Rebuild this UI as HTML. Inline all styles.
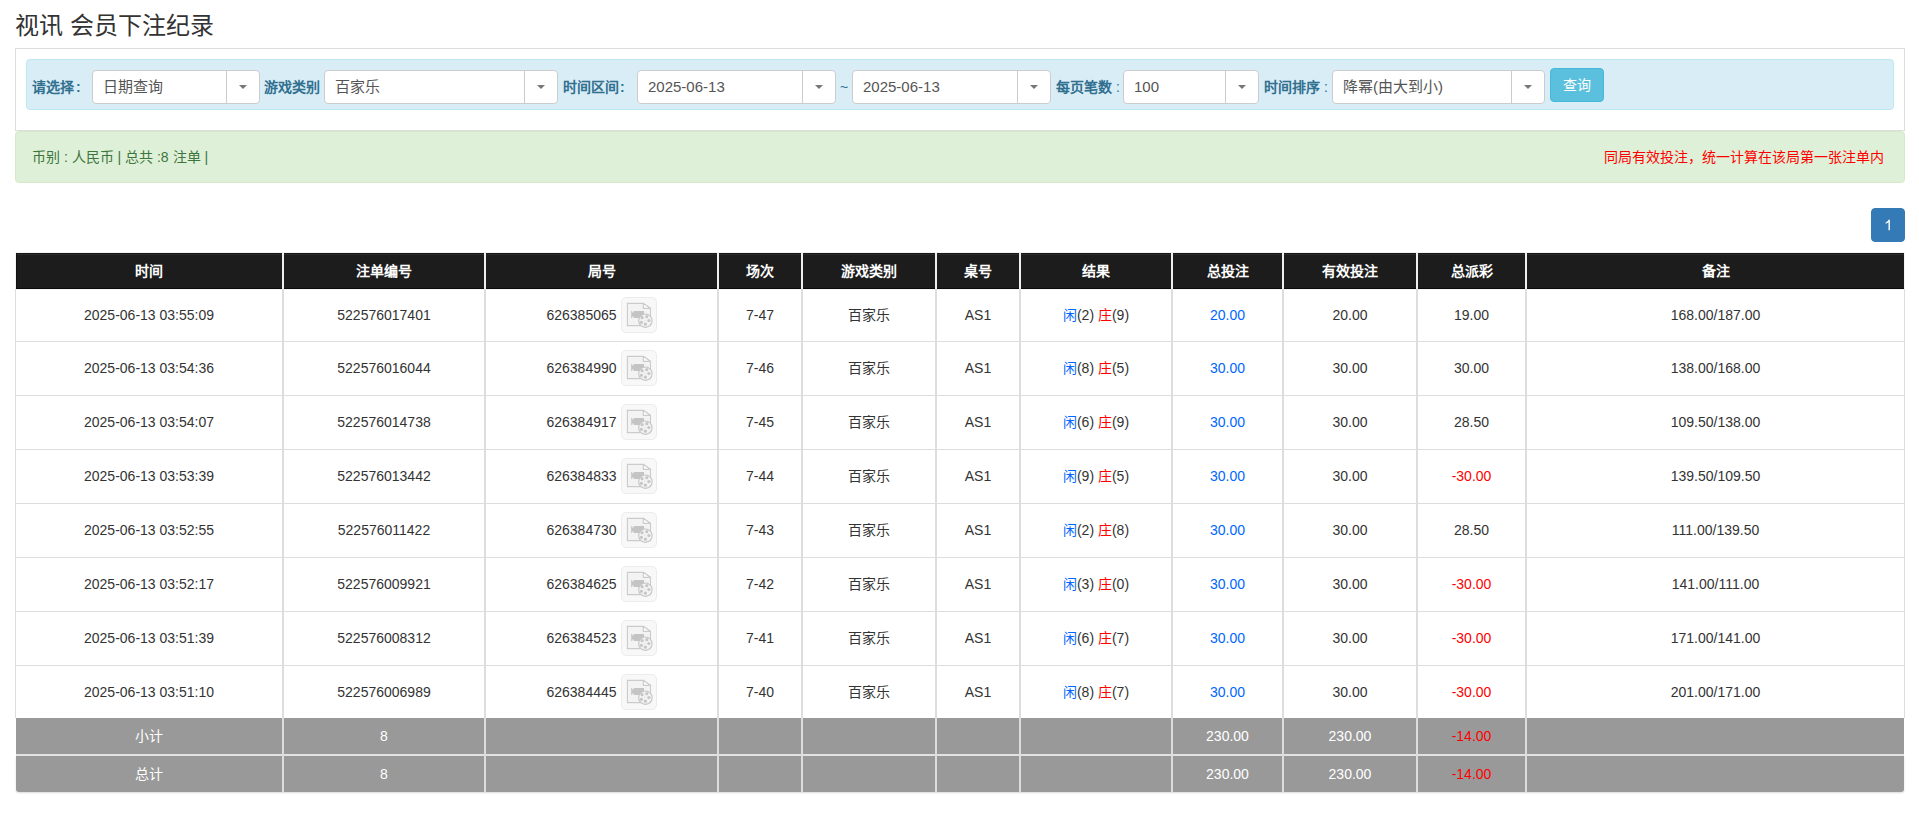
<!DOCTYPE html><html lang="zh-CN"><head><meta charset="utf-8"><style>
*{box-sizing:border-box;margin:0;padding:0}
html,body{width:1919px;height:815px;overflow:hidden;background:#fff}
body{font-family:"Liberation Sans",sans-serif;color:#333;font-size:14px;position:relative}
.a{position:absolute}
.title{left:15px;top:11px;font-size:24px;line-height:30px;color:#333;white-space:nowrap}
.well{left:15px;top:48px;width:1890px;height:83px;border:1px solid #ddd;}
.info{left:26px;top:59px;width:1868px;height:51px;background:#d9edf7;border:1px solid #bce8f1;border-radius:4px}
.lbl{font-weight:bold;color:#31708f;font-size:14px;line-height:16px;top:79px;white-space:nowrap}
.sel{top:70px;height:34px;background:#fff;border:1px solid #ccc;border-radius:4px}
.sel .t{position:absolute;left:10px;top:0;line-height:32px;font-size:15px;color:#555;white-space:nowrap}
.sel .dv{position:absolute;top:0;bottom:0;width:1px;background:#ccc}
.sel .ar{position:absolute;top:14px;width:0;height:0;border-left:4px solid transparent;border-right:4px solid transparent;border-top:4px solid #777}
.btn{left:1550px;top:68px;width:54px;height:34px;background:#5bc0de;border:1px solid #46b8da;border-radius:4px;color:#fff;font-size:14px;line-height:32px;text-align:center}
.succ{left:15px;top:131px;width:1890px;height:52px;background:#dff0d8;border:1px solid #d6e9c6;border-radius:4px}
.succ .l{position:absolute;left:16px;top:0;line-height:50px;font-size:14px;color:#3c763d;white-space:nowrap}
.succ .r{position:absolute;right:20px;top:0;line-height:50px;font-size:14px;color:#ff0000;white-space:nowrap}
.pg{position:absolute;left:1871px;top:208px;width:34px;height:34px;background:#337ab7;border:1px solid #337ab7;border-radius:4px;color:#fff;font-size:13px;font-weight:bold;line-height:32px;text-align:center}
.c{position:absolute;text-align:center;white-space:nowrap}
.hd{top:253px;height:36px;background:#1c1c1c;border-top:1px solid #161616;border-bottom:1px solid #0a0a0a;border-left:1px solid #111;box-shadow:inset 0 1px 0 #2a2a2a,0 0 1px rgba(0,0,0,.25)}
.ht{color:#fff;font-weight:bold;font-size:14px;line-height:36px;top:253px}
.vs{position:absolute;width:2px}
.hl{position:absolute;height:1px;background:#ddd}
.bd{color:#333;font-size:14px}
.blue{color:#0066ff}.red{color:#ff0000}
.ib{display:inline-block;width:36px;height:36px;vertical-align:middle;margin-left:4px;border:1px solid #ececec;border-radius:5px;background:#f8f8f8;position:relative;top:-1px}
.ib svg{position:absolute;left:-1px;top:-1px}
.gr{background:#999}
.gt{color:#fff;font-size:14px}
</style></head><body>

<div class="a title">视讯 会员下注纪录</div>
<div class="a well"></div>
<div class="a info"></div>
<div class="a lbl" style="left:32px">请选择<span style="margin-left:2px">:</span></div>
<div class="a lbl" style="left:264px">游戏类别</div>
<div class="a lbl" style="left:563px">时间区间<span style="margin-left:1px">:</span></div>
<div class="a lbl" style="left:840px;font-weight:normal">~</div>
<div class="a lbl" style="left:1056px">每页笔数 <span style="font-weight:normal">:</span></div>
<div class="a lbl" style="left:1264px">时间排序 <span style="font-weight:normal">:</span></div>
<div class="a sel" style="left:92px;width:168px"><span class="t">日期查询</span><span class="dv" style="left:133px"></span><span class="ar" style="left:146px"></span></div>
<div class="a sel" style="left:324px;width:234px"><span class="t">百家乐</span><span class="dv" style="left:199px"></span><span class="ar" style="left:212px"></span></div>
<div class="a sel" style="left:637px;width:199px"><span class="t">2025-06-13</span><span class="dv" style="left:164px"></span><span class="ar" style="left:177px"></span></div>
<div class="a sel" style="left:852px;width:199px"><span class="t">2025-06-13</span><span class="dv" style="left:164px"></span><span class="ar" style="left:177px"></span></div>
<div class="a sel" style="left:1123px;width:136px"><span class="t">100</span><span class="dv" style="left:101px"></span><span class="ar" style="left:114px"></span></div>
<div class="a sel" style="left:1332px;width:213px"><span class="t">降幂(由大到小)</span><span class="dv" style="left:178px"></span><span class="ar" style="left:191px"></span></div>
<div class="a btn">查询</div>
<div class="a succ"><span class="l">币别 : 人民币 | 总共 :8 注单 |</span><span class="r">同局有效投注，统一计算在该局第一张注单内</span></div>
<div class="a pg"><svg width="34" height="34" style="position:absolute;left:-1px;top:-1px"><path d="M17.5 11.8 H18.9 V22.2 H17.5 V14.2 C16.9 14.8 16 15.3 14.6 15.7 V14.5 C15.9 14 16.8 13.1 17.5 11.8 Z" fill="#fff"/></svg></div>
<div class="a hd" style="left:16px;width:1888px"></div>
<div class="c ht" style="left:16px;width:266px">时间</div>
<div class="c ht" style="left:284px;width:200px">注单编号</div>
<div class="c ht" style="left:486px;width:231px">局号</div>
<div class="c ht" style="left:719px;width:82px">场次</div>
<div class="c ht" style="left:803px;width:132px">游戏类别</div>
<div class="c ht" style="left:937px;width:82px">桌号</div>
<div class="c ht" style="left:1021px;width:150px">结果</div>
<div class="c ht" style="left:1173px;width:109px">总投注</div>
<div class="c ht" style="left:1284px;width:132px">有效投注</div>
<div class="c ht" style="left:1418px;width:107px">总派彩</div>
<div class="c ht" style="left:1527px;width:377px">备注</div>
<div class="c bd" style="left:16px;width:266px;top:289px;height:52px;line-height:52px">2025-06-13 03:55:09</div>
<div class="c bd" style="left:284px;width:200px;top:289px;height:52px;line-height:52px">522576017401</div>
<div class="c bd" style="left:486px;width:231px;top:289px;height:52px;line-height:52px">626385065<span class="ib"><svg width="36" height="36" viewBox="0 0 36 36">
<path d="M6.4 6.4 H22.3 L29.5 11.4 V28.6 H6.4 Z" fill="#f3f3f3" stroke="#cbcbcb" stroke-width="1.1"/>
<path d="M22.3 6.4 V11.4 H29.5 Z" fill="#fdfdfd" stroke="#cbcbcb" stroke-width="1.1" stroke-linejoin="round"/>
<path d="M10.2 14 H11.2 V15.4 H12.6 V14 H23 V21 H12.6 V19.6 H11.2 V21 H10.2 Z" fill="#c4c4c4"/>
<circle cx="24.4" cy="23.7" r="6.7" fill="#f3f3f3" stroke="#c6c6c6" stroke-width="1.1"/>
<circle cx="21.1" cy="20.7" r="1.6" fill="#c6c6c6"/>
<circle cx="25.8" cy="19.7" r="1.6" fill="#c6c6c6"/>
<circle cx="27.9" cy="23.5" r="1.6" fill="#c6c6c6"/>
<circle cx="24.4" cy="27.2" r="1.6" fill="#c6c6c6"/>
<circle cx="20.4" cy="25.3" r="1.6" fill="#c6c6c6"/>
<circle cx="23.9" cy="23.3" r="0.5" fill="#cccccc"/>
</svg></span></div>
<div class="c bd" style="left:719px;width:82px;top:289px;height:52px;line-height:52px">7-47</div>
<div class="c bd" style="left:803px;width:132px;top:289px;height:52px;line-height:52px">百家乐</div>
<div class="c bd" style="left:937px;width:82px;top:289px;height:52px;line-height:52px">AS1</div>
<div class="c bd" style="left:1021px;width:150px;top:289px;height:52px;line-height:52px"><span class="blue">闲</span>(2) <span class="red">庄</span>(9)</div>
<div class="c bd" style="left:1173px;width:109px;top:289px;height:52px;line-height:52px"><span class="blue">20.00</span></div>
<div class="c bd" style="left:1284px;width:132px;top:289px;height:52px;line-height:52px">20.00</div>
<div class="c bd" style="left:1418px;width:107px;top:289px;height:52px;line-height:52px">19.00</div>
<div class="c bd" style="left:1527px;width:377px;top:289px;height:52px;line-height:52px">168.00/187.00</div>
<div class="hl" style="left:15px;width:1890px;top:341px"></div>
<div class="c bd" style="left:16px;width:266px;top:342px;height:53px;line-height:53px">2025-06-13 03:54:36</div>
<div class="c bd" style="left:284px;width:200px;top:342px;height:53px;line-height:53px">522576016044</div>
<div class="c bd" style="left:486px;width:231px;top:342px;height:53px;line-height:53px">626384990<span class="ib"><svg width="36" height="36" viewBox="0 0 36 36">
<path d="M6.4 6.4 H22.3 L29.5 11.4 V28.6 H6.4 Z" fill="#f3f3f3" stroke="#cbcbcb" stroke-width="1.1"/>
<path d="M22.3 6.4 V11.4 H29.5 Z" fill="#fdfdfd" stroke="#cbcbcb" stroke-width="1.1" stroke-linejoin="round"/>
<path d="M10.2 14 H11.2 V15.4 H12.6 V14 H23 V21 H12.6 V19.6 H11.2 V21 H10.2 Z" fill="#c4c4c4"/>
<circle cx="24.4" cy="23.7" r="6.7" fill="#f3f3f3" stroke="#c6c6c6" stroke-width="1.1"/>
<circle cx="21.1" cy="20.7" r="1.6" fill="#c6c6c6"/>
<circle cx="25.8" cy="19.7" r="1.6" fill="#c6c6c6"/>
<circle cx="27.9" cy="23.5" r="1.6" fill="#c6c6c6"/>
<circle cx="24.4" cy="27.2" r="1.6" fill="#c6c6c6"/>
<circle cx="20.4" cy="25.3" r="1.6" fill="#c6c6c6"/>
<circle cx="23.9" cy="23.3" r="0.5" fill="#cccccc"/>
</svg></span></div>
<div class="c bd" style="left:719px;width:82px;top:342px;height:53px;line-height:53px">7-46</div>
<div class="c bd" style="left:803px;width:132px;top:342px;height:53px;line-height:53px">百家乐</div>
<div class="c bd" style="left:937px;width:82px;top:342px;height:53px;line-height:53px">AS1</div>
<div class="c bd" style="left:1021px;width:150px;top:342px;height:53px;line-height:53px"><span class="blue">闲</span>(8) <span class="red">庄</span>(5)</div>
<div class="c bd" style="left:1173px;width:109px;top:342px;height:53px;line-height:53px"><span class="blue">30.00</span></div>
<div class="c bd" style="left:1284px;width:132px;top:342px;height:53px;line-height:53px">30.00</div>
<div class="c bd" style="left:1418px;width:107px;top:342px;height:53px;line-height:53px">30.00</div>
<div class="c bd" style="left:1527px;width:377px;top:342px;height:53px;line-height:53px">138.00/168.00</div>
<div class="hl" style="left:15px;width:1890px;top:395px"></div>
<div class="c bd" style="left:16px;width:266px;top:396px;height:53px;line-height:53px">2025-06-13 03:54:07</div>
<div class="c bd" style="left:284px;width:200px;top:396px;height:53px;line-height:53px">522576014738</div>
<div class="c bd" style="left:486px;width:231px;top:396px;height:53px;line-height:53px">626384917<span class="ib"><svg width="36" height="36" viewBox="0 0 36 36">
<path d="M6.4 6.4 H22.3 L29.5 11.4 V28.6 H6.4 Z" fill="#f3f3f3" stroke="#cbcbcb" stroke-width="1.1"/>
<path d="M22.3 6.4 V11.4 H29.5 Z" fill="#fdfdfd" stroke="#cbcbcb" stroke-width="1.1" stroke-linejoin="round"/>
<path d="M10.2 14 H11.2 V15.4 H12.6 V14 H23 V21 H12.6 V19.6 H11.2 V21 H10.2 Z" fill="#c4c4c4"/>
<circle cx="24.4" cy="23.7" r="6.7" fill="#f3f3f3" stroke="#c6c6c6" stroke-width="1.1"/>
<circle cx="21.1" cy="20.7" r="1.6" fill="#c6c6c6"/>
<circle cx="25.8" cy="19.7" r="1.6" fill="#c6c6c6"/>
<circle cx="27.9" cy="23.5" r="1.6" fill="#c6c6c6"/>
<circle cx="24.4" cy="27.2" r="1.6" fill="#c6c6c6"/>
<circle cx="20.4" cy="25.3" r="1.6" fill="#c6c6c6"/>
<circle cx="23.9" cy="23.3" r="0.5" fill="#cccccc"/>
</svg></span></div>
<div class="c bd" style="left:719px;width:82px;top:396px;height:53px;line-height:53px">7-45</div>
<div class="c bd" style="left:803px;width:132px;top:396px;height:53px;line-height:53px">百家乐</div>
<div class="c bd" style="left:937px;width:82px;top:396px;height:53px;line-height:53px">AS1</div>
<div class="c bd" style="left:1021px;width:150px;top:396px;height:53px;line-height:53px"><span class="blue">闲</span>(6) <span class="red">庄</span>(9)</div>
<div class="c bd" style="left:1173px;width:109px;top:396px;height:53px;line-height:53px"><span class="blue">30.00</span></div>
<div class="c bd" style="left:1284px;width:132px;top:396px;height:53px;line-height:53px">30.00</div>
<div class="c bd" style="left:1418px;width:107px;top:396px;height:53px;line-height:53px">28.50</div>
<div class="c bd" style="left:1527px;width:377px;top:396px;height:53px;line-height:53px">109.50/138.00</div>
<div class="hl" style="left:15px;width:1890px;top:449px"></div>
<div class="c bd" style="left:16px;width:266px;top:450px;height:53px;line-height:53px">2025-06-13 03:53:39</div>
<div class="c bd" style="left:284px;width:200px;top:450px;height:53px;line-height:53px">522576013442</div>
<div class="c bd" style="left:486px;width:231px;top:450px;height:53px;line-height:53px">626384833<span class="ib"><svg width="36" height="36" viewBox="0 0 36 36">
<path d="M6.4 6.4 H22.3 L29.5 11.4 V28.6 H6.4 Z" fill="#f3f3f3" stroke="#cbcbcb" stroke-width="1.1"/>
<path d="M22.3 6.4 V11.4 H29.5 Z" fill="#fdfdfd" stroke="#cbcbcb" stroke-width="1.1" stroke-linejoin="round"/>
<path d="M10.2 14 H11.2 V15.4 H12.6 V14 H23 V21 H12.6 V19.6 H11.2 V21 H10.2 Z" fill="#c4c4c4"/>
<circle cx="24.4" cy="23.7" r="6.7" fill="#f3f3f3" stroke="#c6c6c6" stroke-width="1.1"/>
<circle cx="21.1" cy="20.7" r="1.6" fill="#c6c6c6"/>
<circle cx="25.8" cy="19.7" r="1.6" fill="#c6c6c6"/>
<circle cx="27.9" cy="23.5" r="1.6" fill="#c6c6c6"/>
<circle cx="24.4" cy="27.2" r="1.6" fill="#c6c6c6"/>
<circle cx="20.4" cy="25.3" r="1.6" fill="#c6c6c6"/>
<circle cx="23.9" cy="23.3" r="0.5" fill="#cccccc"/>
</svg></span></div>
<div class="c bd" style="left:719px;width:82px;top:450px;height:53px;line-height:53px">7-44</div>
<div class="c bd" style="left:803px;width:132px;top:450px;height:53px;line-height:53px">百家乐</div>
<div class="c bd" style="left:937px;width:82px;top:450px;height:53px;line-height:53px">AS1</div>
<div class="c bd" style="left:1021px;width:150px;top:450px;height:53px;line-height:53px"><span class="blue">闲</span>(9) <span class="red">庄</span>(5)</div>
<div class="c bd" style="left:1173px;width:109px;top:450px;height:53px;line-height:53px"><span class="blue">30.00</span></div>
<div class="c bd" style="left:1284px;width:132px;top:450px;height:53px;line-height:53px">30.00</div>
<div class="c bd" style="left:1418px;width:107px;top:450px;height:53px;line-height:53px"><span class="red">-30.00</span></div>
<div class="c bd" style="left:1527px;width:377px;top:450px;height:53px;line-height:53px">139.50/109.50</div>
<div class="hl" style="left:15px;width:1890px;top:503px"></div>
<div class="c bd" style="left:16px;width:266px;top:504px;height:53px;line-height:53px">2025-06-13 03:52:55</div>
<div class="c bd" style="left:284px;width:200px;top:504px;height:53px;line-height:53px">522576011422</div>
<div class="c bd" style="left:486px;width:231px;top:504px;height:53px;line-height:53px">626384730<span class="ib"><svg width="36" height="36" viewBox="0 0 36 36">
<path d="M6.4 6.4 H22.3 L29.5 11.4 V28.6 H6.4 Z" fill="#f3f3f3" stroke="#cbcbcb" stroke-width="1.1"/>
<path d="M22.3 6.4 V11.4 H29.5 Z" fill="#fdfdfd" stroke="#cbcbcb" stroke-width="1.1" stroke-linejoin="round"/>
<path d="M10.2 14 H11.2 V15.4 H12.6 V14 H23 V21 H12.6 V19.6 H11.2 V21 H10.2 Z" fill="#c4c4c4"/>
<circle cx="24.4" cy="23.7" r="6.7" fill="#f3f3f3" stroke="#c6c6c6" stroke-width="1.1"/>
<circle cx="21.1" cy="20.7" r="1.6" fill="#c6c6c6"/>
<circle cx="25.8" cy="19.7" r="1.6" fill="#c6c6c6"/>
<circle cx="27.9" cy="23.5" r="1.6" fill="#c6c6c6"/>
<circle cx="24.4" cy="27.2" r="1.6" fill="#c6c6c6"/>
<circle cx="20.4" cy="25.3" r="1.6" fill="#c6c6c6"/>
<circle cx="23.9" cy="23.3" r="0.5" fill="#cccccc"/>
</svg></span></div>
<div class="c bd" style="left:719px;width:82px;top:504px;height:53px;line-height:53px">7-43</div>
<div class="c bd" style="left:803px;width:132px;top:504px;height:53px;line-height:53px">百家乐</div>
<div class="c bd" style="left:937px;width:82px;top:504px;height:53px;line-height:53px">AS1</div>
<div class="c bd" style="left:1021px;width:150px;top:504px;height:53px;line-height:53px"><span class="blue">闲</span>(2) <span class="red">庄</span>(8)</div>
<div class="c bd" style="left:1173px;width:109px;top:504px;height:53px;line-height:53px"><span class="blue">30.00</span></div>
<div class="c bd" style="left:1284px;width:132px;top:504px;height:53px;line-height:53px">30.00</div>
<div class="c bd" style="left:1418px;width:107px;top:504px;height:53px;line-height:53px">28.50</div>
<div class="c bd" style="left:1527px;width:377px;top:504px;height:53px;line-height:53px">111.00/139.50</div>
<div class="hl" style="left:15px;width:1890px;top:557px"></div>
<div class="c bd" style="left:16px;width:266px;top:558px;height:53px;line-height:53px">2025-06-13 03:52:17</div>
<div class="c bd" style="left:284px;width:200px;top:558px;height:53px;line-height:53px">522576009921</div>
<div class="c bd" style="left:486px;width:231px;top:558px;height:53px;line-height:53px">626384625<span class="ib"><svg width="36" height="36" viewBox="0 0 36 36">
<path d="M6.4 6.4 H22.3 L29.5 11.4 V28.6 H6.4 Z" fill="#f3f3f3" stroke="#cbcbcb" stroke-width="1.1"/>
<path d="M22.3 6.4 V11.4 H29.5 Z" fill="#fdfdfd" stroke="#cbcbcb" stroke-width="1.1" stroke-linejoin="round"/>
<path d="M10.2 14 H11.2 V15.4 H12.6 V14 H23 V21 H12.6 V19.6 H11.2 V21 H10.2 Z" fill="#c4c4c4"/>
<circle cx="24.4" cy="23.7" r="6.7" fill="#f3f3f3" stroke="#c6c6c6" stroke-width="1.1"/>
<circle cx="21.1" cy="20.7" r="1.6" fill="#c6c6c6"/>
<circle cx="25.8" cy="19.7" r="1.6" fill="#c6c6c6"/>
<circle cx="27.9" cy="23.5" r="1.6" fill="#c6c6c6"/>
<circle cx="24.4" cy="27.2" r="1.6" fill="#c6c6c6"/>
<circle cx="20.4" cy="25.3" r="1.6" fill="#c6c6c6"/>
<circle cx="23.9" cy="23.3" r="0.5" fill="#cccccc"/>
</svg></span></div>
<div class="c bd" style="left:719px;width:82px;top:558px;height:53px;line-height:53px">7-42</div>
<div class="c bd" style="left:803px;width:132px;top:558px;height:53px;line-height:53px">百家乐</div>
<div class="c bd" style="left:937px;width:82px;top:558px;height:53px;line-height:53px">AS1</div>
<div class="c bd" style="left:1021px;width:150px;top:558px;height:53px;line-height:53px"><span class="blue">闲</span>(3) <span class="red">庄</span>(0)</div>
<div class="c bd" style="left:1173px;width:109px;top:558px;height:53px;line-height:53px"><span class="blue">30.00</span></div>
<div class="c bd" style="left:1284px;width:132px;top:558px;height:53px;line-height:53px">30.00</div>
<div class="c bd" style="left:1418px;width:107px;top:558px;height:53px;line-height:53px"><span class="red">-30.00</span></div>
<div class="c bd" style="left:1527px;width:377px;top:558px;height:53px;line-height:53px">141.00/111.00</div>
<div class="hl" style="left:15px;width:1890px;top:611px"></div>
<div class="c bd" style="left:16px;width:266px;top:612px;height:53px;line-height:53px">2025-06-13 03:51:39</div>
<div class="c bd" style="left:284px;width:200px;top:612px;height:53px;line-height:53px">522576008312</div>
<div class="c bd" style="left:486px;width:231px;top:612px;height:53px;line-height:53px">626384523<span class="ib"><svg width="36" height="36" viewBox="0 0 36 36">
<path d="M6.4 6.4 H22.3 L29.5 11.4 V28.6 H6.4 Z" fill="#f3f3f3" stroke="#cbcbcb" stroke-width="1.1"/>
<path d="M22.3 6.4 V11.4 H29.5 Z" fill="#fdfdfd" stroke="#cbcbcb" stroke-width="1.1" stroke-linejoin="round"/>
<path d="M10.2 14 H11.2 V15.4 H12.6 V14 H23 V21 H12.6 V19.6 H11.2 V21 H10.2 Z" fill="#c4c4c4"/>
<circle cx="24.4" cy="23.7" r="6.7" fill="#f3f3f3" stroke="#c6c6c6" stroke-width="1.1"/>
<circle cx="21.1" cy="20.7" r="1.6" fill="#c6c6c6"/>
<circle cx="25.8" cy="19.7" r="1.6" fill="#c6c6c6"/>
<circle cx="27.9" cy="23.5" r="1.6" fill="#c6c6c6"/>
<circle cx="24.4" cy="27.2" r="1.6" fill="#c6c6c6"/>
<circle cx="20.4" cy="25.3" r="1.6" fill="#c6c6c6"/>
<circle cx="23.9" cy="23.3" r="0.5" fill="#cccccc"/>
</svg></span></div>
<div class="c bd" style="left:719px;width:82px;top:612px;height:53px;line-height:53px">7-41</div>
<div class="c bd" style="left:803px;width:132px;top:612px;height:53px;line-height:53px">百家乐</div>
<div class="c bd" style="left:937px;width:82px;top:612px;height:53px;line-height:53px">AS1</div>
<div class="c bd" style="left:1021px;width:150px;top:612px;height:53px;line-height:53px"><span class="blue">闲</span>(6) <span class="red">庄</span>(7)</div>
<div class="c bd" style="left:1173px;width:109px;top:612px;height:53px;line-height:53px"><span class="blue">30.00</span></div>
<div class="c bd" style="left:1284px;width:132px;top:612px;height:53px;line-height:53px">30.00</div>
<div class="c bd" style="left:1418px;width:107px;top:612px;height:53px;line-height:53px"><span class="red">-30.00</span></div>
<div class="c bd" style="left:1527px;width:377px;top:612px;height:53px;line-height:53px">171.00/141.00</div>
<div class="hl" style="left:15px;width:1890px;top:665px"></div>
<div class="c bd" style="left:16px;width:266px;top:666px;height:52px;line-height:52px">2025-06-13 03:51:10</div>
<div class="c bd" style="left:284px;width:200px;top:666px;height:52px;line-height:52px">522576006989</div>
<div class="c bd" style="left:486px;width:231px;top:666px;height:52px;line-height:52px">626384445<span class="ib"><svg width="36" height="36" viewBox="0 0 36 36">
<path d="M6.4 6.4 H22.3 L29.5 11.4 V28.6 H6.4 Z" fill="#f3f3f3" stroke="#cbcbcb" stroke-width="1.1"/>
<path d="M22.3 6.4 V11.4 H29.5 Z" fill="#fdfdfd" stroke="#cbcbcb" stroke-width="1.1" stroke-linejoin="round"/>
<path d="M10.2 14 H11.2 V15.4 H12.6 V14 H23 V21 H12.6 V19.6 H11.2 V21 H10.2 Z" fill="#c4c4c4"/>
<circle cx="24.4" cy="23.7" r="6.7" fill="#f3f3f3" stroke="#c6c6c6" stroke-width="1.1"/>
<circle cx="21.1" cy="20.7" r="1.6" fill="#c6c6c6"/>
<circle cx="25.8" cy="19.7" r="1.6" fill="#c6c6c6"/>
<circle cx="27.9" cy="23.5" r="1.6" fill="#c6c6c6"/>
<circle cx="24.4" cy="27.2" r="1.6" fill="#c6c6c6"/>
<circle cx="20.4" cy="25.3" r="1.6" fill="#c6c6c6"/>
<circle cx="23.9" cy="23.3" r="0.5" fill="#cccccc"/>
</svg></span></div>
<div class="c bd" style="left:719px;width:82px;top:666px;height:52px;line-height:52px">7-40</div>
<div class="c bd" style="left:803px;width:132px;top:666px;height:52px;line-height:52px">百家乐</div>
<div class="c bd" style="left:937px;width:82px;top:666px;height:52px;line-height:52px">AS1</div>
<div class="c bd" style="left:1021px;width:150px;top:666px;height:52px;line-height:52px"><span class="blue">闲</span>(8) <span class="red">庄</span>(7)</div>
<div class="c bd" style="left:1173px;width:109px;top:666px;height:52px;line-height:52px"><span class="blue">30.00</span></div>
<div class="c bd" style="left:1284px;width:132px;top:666px;height:52px;line-height:52px">30.00</div>
<div class="c bd" style="left:1418px;width:107px;top:666px;height:52px;line-height:52px"><span class="red">-30.00</span></div>
<div class="c bd" style="left:1527px;width:377px;top:666px;height:52px;line-height:52px">201.00/171.00</div>
<div class="a gr" style="left:16px;width:1888px;top:718px;height:36px"></div>
<div class="c gt" style="left:16px;width:266px;top:718px;height:36px;line-height:36px">小计</div>
<div class="c gt" style="left:284px;width:200px;top:718px;height:36px;line-height:36px">8</div>
<div class="c gt" style="left:486px;width:231px;top:718px;height:36px;line-height:36px"></div>
<div class="c gt" style="left:719px;width:82px;top:718px;height:36px;line-height:36px"></div>
<div class="c gt" style="left:803px;width:132px;top:718px;height:36px;line-height:36px"></div>
<div class="c gt" style="left:937px;width:82px;top:718px;height:36px;line-height:36px"></div>
<div class="c gt" style="left:1021px;width:150px;top:718px;height:36px;line-height:36px"></div>
<div class="c gt" style="left:1173px;width:109px;top:718px;height:36px;line-height:36px">230.00</div>
<div class="c gt" style="left:1284px;width:132px;top:718px;height:36px;line-height:36px">230.00</div>
<div class="c gt" style="left:1418px;width:107px;top:718px;height:36px;line-height:36px"><span class="red">-14.00</span></div>
<div class="c gt" style="left:1527px;width:377px;top:718px;height:36px;line-height:36px"></div>
<div class="a gr" style="left:16px;width:1888px;top:756px;height:36px;border-radius:0 0 3px 3px;box-shadow:0 1px 2px rgba(0,0,0,.15)"></div>
<div class="c gt" style="left:16px;width:266px;top:756px;height:36px;line-height:36px">总计</div>
<div class="c gt" style="left:284px;width:200px;top:756px;height:36px;line-height:36px">8</div>
<div class="c gt" style="left:486px;width:231px;top:756px;height:36px;line-height:36px"></div>
<div class="c gt" style="left:719px;width:82px;top:756px;height:36px;line-height:36px"></div>
<div class="c gt" style="left:803px;width:132px;top:756px;height:36px;line-height:36px"></div>
<div class="c gt" style="left:937px;width:82px;top:756px;height:36px;line-height:36px"></div>
<div class="c gt" style="left:1021px;width:150px;top:756px;height:36px;line-height:36px"></div>
<div class="c gt" style="left:1173px;width:109px;top:756px;height:36px;line-height:36px">230.00</div>
<div class="c gt" style="left:1284px;width:132px;top:756px;height:36px;line-height:36px">230.00</div>
<div class="c gt" style="left:1418px;width:107px;top:756px;height:36px;line-height:36px"><span class="red">-14.00</span></div>
<div class="c gt" style="left:1527px;width:377px;top:756px;height:36px;line-height:36px"></div>
<div class="hl" style="left:16px;width:1888px;top:754px;height:2px;background:#e2e2e2"></div>
<div class="vs" style="left:282px;top:253px;height:36px;background:#eee"></div>
<div class="vs" style="left:282px;top:289px;height:503px;background:#ddd"></div>
<div class="vs" style="left:484px;top:253px;height:36px;background:#eee"></div>
<div class="vs" style="left:484px;top:289px;height:503px;background:#ddd"></div>
<div class="vs" style="left:717px;top:253px;height:36px;background:#eee"></div>
<div class="vs" style="left:717px;top:289px;height:503px;background:#ddd"></div>
<div class="vs" style="left:801px;top:253px;height:36px;background:#eee"></div>
<div class="vs" style="left:801px;top:289px;height:503px;background:#ddd"></div>
<div class="vs" style="left:935px;top:253px;height:36px;background:#eee"></div>
<div class="vs" style="left:935px;top:289px;height:503px;background:#ddd"></div>
<div class="vs" style="left:1019px;top:253px;height:36px;background:#eee"></div>
<div class="vs" style="left:1019px;top:289px;height:503px;background:#ddd"></div>
<div class="vs" style="left:1171px;top:253px;height:36px;background:#eee"></div>
<div class="vs" style="left:1171px;top:289px;height:503px;background:#ddd"></div>
<div class="vs" style="left:1282px;top:253px;height:36px;background:#eee"></div>
<div class="vs" style="left:1282px;top:289px;height:503px;background:#ddd"></div>
<div class="vs" style="left:1416px;top:253px;height:36px;background:#eee"></div>
<div class="vs" style="left:1416px;top:289px;height:503px;background:#ddd"></div>
<div class="vs" style="left:1525px;top:253px;height:36px;background:#eee"></div>
<div class="vs" style="left:1525px;top:289px;height:503px;background:#ddd"></div>
<div class="vs" style="left:15px;top:289px;height:429px;width:1px;background:#ddd"></div>
<div class="vs" style="left:1904px;top:289px;height:429px;width:1px;background:#ddd"></div>
</body></html>
